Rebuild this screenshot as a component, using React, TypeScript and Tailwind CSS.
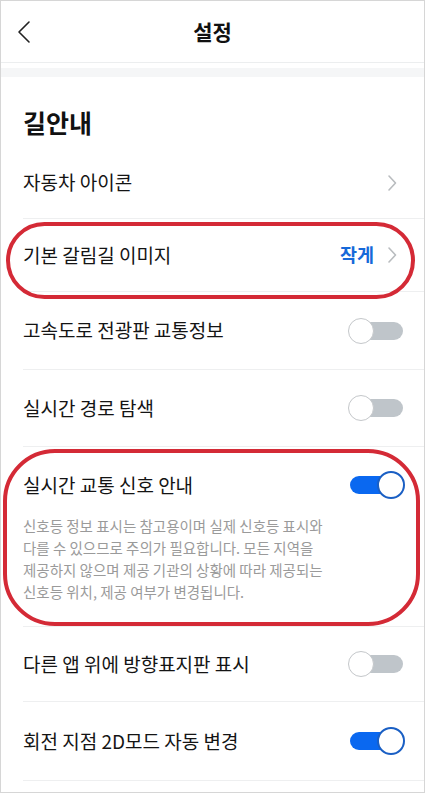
import React from "react";

const FONT = { fontFamily: '"Noto Sans CJK KR", "Noto Sans", sans-serif' };

function Chevron() {
  return (
    <svg width="10" height="18" viewBox="0 0 10 18" className="mr-[8px]">
      <polyline points="2,2 8.5,9 2,16" fill="none" stroke="#b9bcbf" strokeWidth="1.6" strokeLinecap="round" strokeLinejoin="round" />
    </svg>
  );
}

function Toggle({ on }: { on: boolean }) {
  return (
    <div className="relative w-[57px] h-[28px] shrink-0">
      <div
        className={
          on
            ? "absolute left-[2px] right-[4px] top-[5px] h-[18px] rounded-full bg-[#0a68f0]"
            : "absolute left-[2px] right-[2px] top-[5px] h-[18px] rounded-full bg-[#bfc5ca]"
        }
      />
      <div
        className={
          on
            ? "absolute right-0 top-0 w-[28px] h-[28px] rounded-full bg-white border-2 border-[#1a5fc4]"
            : "absolute left-0 top-[1px] w-[26px] h-[26px] rounded-full bg-white border border-[#c4c7ca]"
        }
      />
    </div>
  );
}

function Row({
  label,
  h,
  right,
}: {
  label: string;
  h: string;
  right: React.ReactNode;
}) {
  return (
    <div className={`ml-[22px] pr-[19px] flex items-center justify-between border-b border-[#eeeff0] ${h}`}>
      <span className="text-[19px] text-[#141414]">{label}</span>
      {right}
    </div>
  );
}

export default function App() {
  return (
    <div style={FONT} className="relative w-[425px] h-[793px] bg-white border border-[#d6d6d6] overflow-hidden">
      {/* top bar */}
      <div className="relative h-[62px] flex items-center justify-center border-b border-[#eceeef]">
        <svg width="14" height="24" viewBox="0 0 14 24" className="absolute left-[16px] top-[19px]">
          <polyline points="12,2 2,12 12,22" fill="none" stroke="#222" strokeWidth="1.6" strokeLinecap="round" strokeLinejoin="round" />
        </svg>
        <span className="text-[21px] font-bold text-[#111]">설정</span>
      </div>
      <div className="h-[5px] bg-white" />
      <div className="h-[9px] bg-[#f5f6f7]" />

      {/* section */}
      <div className="h-[70px] flex items-center pl-[22px] pt-[22px]">
        <span className="text-[25px] font-bold text-[#111]">길안내</span>
      </div>

      <Row label="자동차 아이콘" h="h-[72px]" right={<Chevron />} />
      <Row
        label="기본 갈림길 이미지"
        h="h-[73px]"
        right={
          <div className="flex items-center gap-[13px]">
            <span className="text-[18.5px] font-bold text-[#1669d9]">작게</span>
            <Chevron />
          </div>
        }
      />
      <Row label="고속도로 전광판 교통정보" h="h-[78px]" right={<Toggle on={false} />} />
      <Row label="실시간 경로 탐색" h="h-[77px]" right={<Toggle on={false} />} />

      <div className="ml-[22px] pr-[19px] h-[180px] border-b border-[#eeeff0] pt-[22px]">
        <div className="flex items-center justify-between h-[32px]">
          <span className="text-[19px] text-[#141414]">실시간 교통 신호 안내</span>
          <Toggle on={true} />
        </div>
        <p className="mt-[14px] text-[14.5px] leading-[22px] text-[#9a9a9a] w-[330px]">
          신호등 정보 표시는 참고용이며 실제 신호등 표시와
          <br />
          다를 수 있으므로 주의가 필요합니다. 모든 지역을
          <br />
          제공하지 않으며 제공 기관의 상황에 따라 제공되는
          <br />
          신호등 위치, 제공 여부가 변경됩니다.
        </p>
      </div>

      <Row label="다른 앱 위에 방향표지판 표시" h="h-[75px]" right={<Toggle on={false} />} />
      <Row label="회전 지점 2D모드 자동 변경" h="h-[79px]" right={<Toggle on={true} />} />

      {/* highlight marks */}
      <div className="absolute left-[5px] top-[221px] w-[409px] h-[77px] rounded-[40px] border-[4px] border-[#d42a36] pointer-events-none" />
      <div className="absolute left-[2px] top-[448px] w-[417px] h-[177px] rounded-[52px] border-[4px] border-[#d42a36] pointer-events-none" />
    </div>
  );
}
